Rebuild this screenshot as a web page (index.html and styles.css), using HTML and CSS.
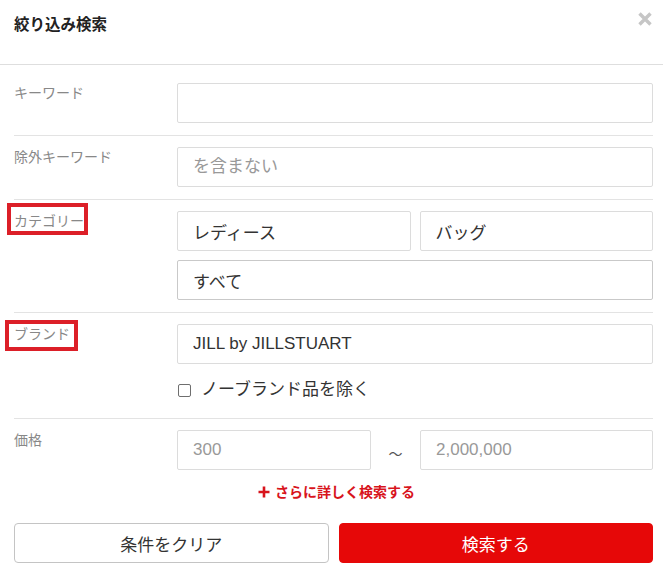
FILE: index.html
```html
<!DOCTYPE html>
<html lang="ja">
<head>
    <meta charset="UTF-8">
    <meta name="viewport" content="width=device-width, initial-scale=1.0">
    <title>絞り込み検索</title>
    <link rel="stylesheet" href="styles.css">
</head>
<body>

<div class="modal-header">
    <h1 class="modal-title">絞り込み検索</h1>
    <button class="close" type="button" aria-label="閉じる">
        <svg width="16" height="16" viewBox="0 0 16 16">
            <path d="M2.5 2.5 L13.5 13.5 M13.5 2.5 L2.5 13.5" stroke="#c6c6c6" stroke-width="3.4" fill="none"/>
        </svg>
    </button>
</div>

<form class="search-form">
    <div class="row row-first">
        <label class="label">キーワード</label>
        <div class="fields">
            <input class="field" type="text">
        </div>
    </div>

    <div class="row">
        <label class="label">除外キーワード</label>
        <div class="fields">
            <input class="field" type="text" placeholder="を含まない">
        </div>
    </div>

    <div class="row">
        <label class="label">カテゴリー<span class="mark mark-category"></span></label>
        <div class="fields">
            <div class="pair">
                <input class="field" type="text" value="レディース" readonly>
                <input class="field" type="text" value="バッグ" readonly>
            </div>
            <input class="field field-select" type="text" value="すべて" readonly>
        </div>
    </div>

    <div class="row row-brand">
        <label class="label">ブランド<span class="mark mark-brand"></span></label>
        <div class="fields">
            <input class="field" type="text" value="JILL by JILLSTUART">
            <label class="check">
                <input type="checkbox">
                <span>ノーブランド品を除く</span>
            </label>
        </div>
    </div>

    <div class="row row-last">
        <label class="label">価格</label>
        <div class="fields">
            <div class="price">
                <input class="field" type="text" placeholder="300">
                <span class="tilde">～</span>
                <input class="field" type="text" placeholder="2,000,000">
            </div>
        </div>
    </div>

    <a class="more" href="#">
        <svg width="12" height="12" viewBox="0 0 12 12">
            <path d="M6 0.5 V11.5 M0.5 6 H11.5" stroke="#d8141c" stroke-width="2.6" fill="none"/>
        </svg>
        さらに詳しく検索する
    </a>

    <div class="actions">
        <button class="btn btn-clear" type="button">条件をクリア</button>
        <button class="btn btn-search" type="submit">検索する</button>
    </div>
</form>

</body>
</html>
```

FILE: styles.css
```css
body {
    margin: 0;
    background-color: #fff;
    color: #333;
    font-family: 'Liberation Sans', 'Noto Sans CJK JP', sans-serif;
}
.modal-header {
    display: flex;
    justify-content: space-between;
    align-items: flex-start;
    height: 65px;
    padding: 11px 10px 0 14px;
    box-sizing: border-box;
    border-bottom: 1px solid #dedede;
}
.modal-title {
    margin: 4px 0 0;
    font-size: 15.5px;
    line-height: 20px;
    font-weight: bold;
    color: #222;
}
.close {
    padding: 0;
    border: none;
    background: none;
    width: 16px;
    height: 16px;
    cursor: pointer;
}
.close svg {
    display: block;
}
.search-form {
    padding: 0 10px 0 14px;
}
.row {
    display: flex;
    padding: 11px 0 12px;
    border-bottom: 1px solid #e3e3e3;
}
.row-first {
    padding-top: 18px;
}
.row-last {
    border-bottom: none;
}
.label {
    position: relative;
    flex: 0 0 163px;
    align-self: flex-start;
    font-size: 14px;
    line-height: 20px;
    color: #888;
}
.label:has(.mark) {
    flex: none;
    width: auto;
    margin-right: auto;
}
.mark {
    position: absolute;
    border: 4px solid #dc1f28;
    box-sizing: border-box;
}
.mark-category {
    left: -7px;
    top: -8px;
    width: 81px;
    height: 32px;
}
.mark-brand {
    left: -9px;
    top: -4px;
    width: 73px;
    height: 31px;
}
.fields {
    flex: 0 0 476px;
    display: flex;
    flex-direction: column;
    gap: 9px;
    margin-left: auto;
}
.field {
    display: block;
    width: 100%;
    height: 40px;
    box-sizing: border-box;
    padding: 0 15px;
    border: 1px solid #dcdcdc;
    border-radius: 2px;
    font-family: inherit;
    font-size: 17px;
    color: #333;
    background-color: #fff;
    outline: none;
}
.field::placeholder {
    color: #999;
}
.field-select {
    border-color: #c9c9c9;
}
.pair {
    display: grid;
    grid-template-columns: 1fr 1fr;
    gap: 9px;
}
.check {
    display: flex;
    align-items: center;
    gap: 10px;
    margin: 5px 0 4px;
    font-size: 17px;
    line-height: 24px;
    color: #333;
    cursor: pointer;
}
.check input {
    appearance: none;
    width: 13px;
    height: 13px;
    margin: 0 0 0 1px;
    border: 1px solid #6e6e6e;
    border-radius: 2px;
    background-color: #fff;
}
.price {
    display: grid;
    grid-template-columns: 194px 49px 1fr;
    align-items: center;
}
.tilde {
    text-align: center;
    font-size: 14px;
    color: #555;
    padding-top: 6px;
}
.more {
    display: flex;
    justify-content: center;
    align-items: center;
    gap: 5px;
    margin-top: 0;
    font-size: 14px;
    line-height: 20px;
    font-weight: bold;
    color: #d8141c;
    text-decoration: none;
}
.more svg {
    margin-left: 6px;
}
.actions {
    display: grid;
    grid-template-columns: 1fr 1fr;
    gap: 10px;
    margin-top: 21px;
}
.btn {
    height: 40px;
    border-radius: 4px;
    font-family: inherit;
    font-size: 17px;
    cursor: pointer;
}
.btn-clear {
    background-color: #fff;
    border: 1px solid #c4c4c4;
    color: #333;
}
.btn-search {
    background-color: #e60808;
    border: 1px solid #e60808;
    color: #fff;
}
```
